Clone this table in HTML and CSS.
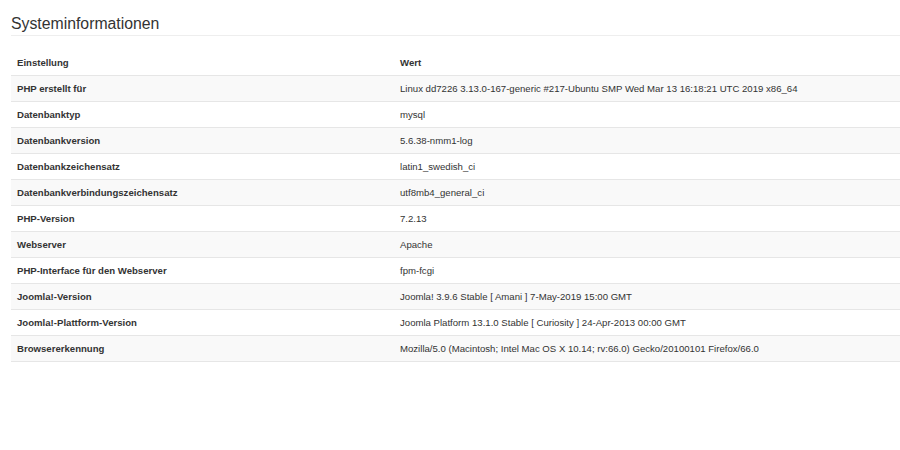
FILE: index.html
```html
<!DOCTYPE html>
<html lang="de">
<head>
<meta charset="utf-8">
<title>Systeminformationen</title>
<link rel="stylesheet" href="styles.css">
</head>
<body>
<div class="page">
  <h2 class="title">Systeminformationen</h2>
  <table class="info">
    <colgroup><col class="col-key"><col class="col-val"></colgroup>
    <thead>
      <tr><th>Einstellung</th><th>Wert</th></tr>
    </thead>
    <tbody>
      <tr><th>PHP erstellt für</th><td>Linux dd7226 3.13.0-167-generic #217-Ubuntu SMP Wed Mar 13 16:18:21 UTC 2019 x86_64</td></tr>
      <tr><th>Datenbanktyp</th><td>mysql</td></tr>
      <tr><th>Datenbankversion</th><td>5.6.38-nmm1-log</td></tr>
      <tr><th>Datenbankzeichensatz</th><td>latin1_swedish_ci</td></tr>
      <tr><th>Datenbankverbindungszeichensatz</th><td>utf8mb4_general_ci</td></tr>
      <tr><th>PHP-Version</th><td>7.2.13</td></tr>
      <tr><th>Webserver</th><td>Apache</td></tr>
      <tr><th>PHP-Interface für den Webserver</th><td>fpm-fcgi</td></tr>
      <tr><th>Joomla!-Version</th><td>Joomla! 3.9.6 Stable [ Amani ] 7-May-2019 15:00 GMT</td></tr>
      <tr><th>Joomla!-Plattform-Version</th><td>Joomla Platform 13.1.0 Stable [ Curiosity ] 24-Apr-2013 00:00 GMT</td></tr>
      <tr><th>Browsererkennung</th><td>Mozilla/5.0 (Macintosh; Intel Mac OS X 10.14; rv:66.0) Gecko/20100101 Firefox/66.0</td></tr>
    </tbody>
  </table>
</div>
</body>
</html>
```
FILE: styles.css
```css
html, body {
  margin: 0;
  padding: 0;
  background: #fff;
}
body {
  font-family: "Liberation Sans", Arial, sans-serif;
  color: #333;
}
.page {
  padding: 14px 0 0 11px;
}
.title {
  margin: 0;
  font-size: 15.8px;
  font-weight: normal;
  color: #333;
  line-height: 20px;
  padding-bottom: 1px;
  border-bottom: 1px solid #eee;
}
.info {
  margin-top: 14px;
  width: 100%;
  table-layout: fixed;
  border-collapse: collapse;
  font-size: 9.6px;
}
.col-key {
  width: 383px;
}
.info th, .info td {
  text-align: left;
  padding: 0 6px;
  height: 25px;
  border-bottom: 1px solid #e6e6e6;
  vertical-align: middle;
  white-space: nowrap;
}
.info th {
  font-weight: bold;
}
.info td {
  font-weight: normal;
}
.info tbody tr:nth-child(odd) {
  background: #f9f9f9;
}
```
